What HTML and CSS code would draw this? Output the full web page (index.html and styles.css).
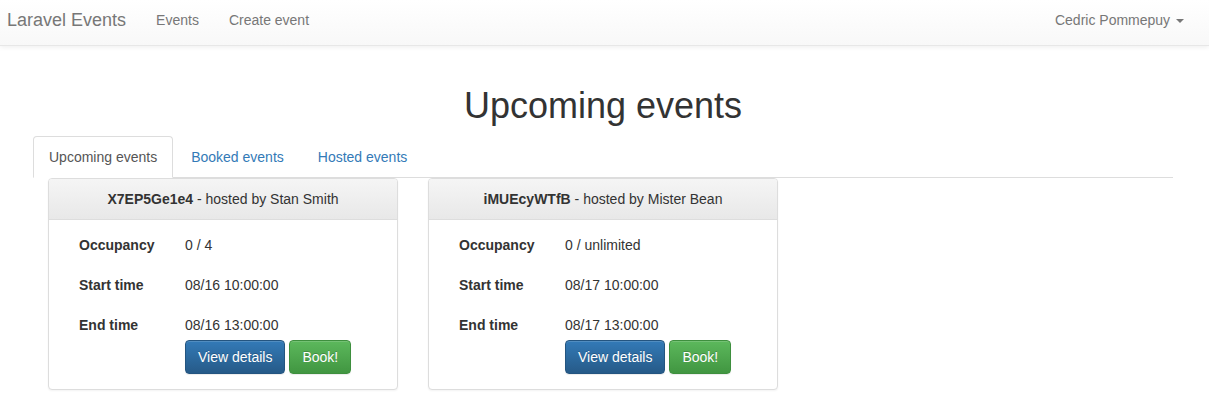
FILE: index.html
```html
<!DOCTYPE html>
<html lang="en">
<head>
<meta charset="utf-8">
<title>Laravel Events</title>
<link rel="stylesheet" href="styles.css">
</head>
<body>
<nav class="navbar">
  <div class="nav-left">
    <a class="brand" href="#">Laravel Events</a>
    <a class="nav-link" href="#">Events</a>
    <a class="nav-link" href="#">Create event</a>
  </div>
  <div class="nav-right">
    <a class="nav-link" href="#">Cedric Pommepuy <span class="caret"></span></a>
  </div>
</nav>

<main class="container">
  <h1 class="title">Upcoming events</h1>
  <ul class="tabs">
    <li class="tab active"><a href="#">Upcoming events</a></li>
    <li class="tab"><a href="#">Booked events</a></li>
    <li class="tab"><a href="#">Hosted events</a></li>
  </ul>

  <div class="cards">
    <div class="col">
      <div class="panel">
        <div class="panel-heading"><strong>X7EP5Ge1e4</strong> - hosted by Stan Smith</div>
        <div class="panel-body">
          <div class="line"><span class="label">Occupancy</span><span class="value">0 / 4</span></div>
          <div class="line"><span class="label">Start time</span><span class="value">08/16 10:00:00</span></div>
          <div class="line last"><span class="label">End time</span><span class="value">08/16 13:00:00</span></div>
          <div class="actions">
            <a class="btn btn-primary" href="#">View details</a>
            <a class="btn btn-success" href="#">Book!</a>
          </div>
        </div>
      </div>
    </div>
    <div class="col">
      <div class="panel">
        <div class="panel-heading"><strong>iMUEcyWTfB</strong> - hosted by Mister Bean</div>
        <div class="panel-body">
          <div class="line"><span class="label">Occupancy</span><span class="value">0 / unlimited</span></div>
          <div class="line"><span class="label">Start time</span><span class="value">08/17 10:00:00</span></div>
          <div class="line last"><span class="label">End time</span><span class="value">08/17 13:00:00</span></div>
          <div class="actions">
            <a class="btn btn-primary" href="#">View details</a>
            <a class="btn btn-success" href="#">Book!</a>
          </div>
        </div>
      </div>
    </div>
  </div>
</main>
</body>
</html>
```

FILE: styles.css
```css
* { box-sizing: border-box; }

html, body {
  margin: 0;
  padding: 0;
}

body {
  font-family: "Liberation Sans", Arial, Helvetica, sans-serif;
  font-size: 14px;
  line-height: 20px;
  color: #333;
  background: #fff;
}

a { text-decoration: none; }

/* Navbar */
.navbar {
  display: flex;
  justify-content: space-between;
  align-items: flex-start;
  height: 46px;
  background-image: linear-gradient(to bottom, #fff 0, #f8f8f8 100%);
  border-bottom: 1px solid #e7e7e7;
  box-shadow: inset 0 1px 0 rgba(255,255,255,.15), 0 1px 5px rgba(0,0,0,.075);
  margin-bottom: 20px;
}

.nav-left, .nav-right {
  display: flex;
  align-items: flex-start;
}

.nav-right { margin-right: 10px; }

.brand {
  display: block;
  padding: 10px 15px 15px 7px;
  font-size: 18px;
  line-height: 20px;
  color: #777;
}

.nav-link {
  display: block;
  padding: 10px 15px;
  line-height: 20px;
  color: #777;
}

.caret {
  display: inline-block;
  width: 0;
  height: 0;
  margin-left: 2px;
  vertical-align: middle;
  border-top: 4px solid #777;
  border-right: 4px solid transparent;
  border-left: 4px solid transparent;
}

/* Container */
.container {
  width: 1143px;
  padding-right: 3px;
  margin: 0 auto;
}

.title {
  margin: 40px 0 10px;
  font-size: 36px;
  font-weight: 500;
  line-height: 1.1;
  text-align: center;
  color: #333;
}

/* Tabs */
.tabs {
  display: flex;
  list-style: none;
  margin: 0;
  padding: 0;
  border-bottom: 1px solid #ddd;
}

.tab {
  margin-right: 2px;
  margin-bottom: -1px;
}

.tab a {
  display: block;
  padding: 10px 15px;
  line-height: 20px;
  color: #337ab7;
  border: 1px solid transparent;
  border-radius: 4px 4px 0 0;
}

.tab.active a {
  color: #555;
  background: #fff;
  border-color: #ddd #ddd transparent;
}

/* Cards */
.cards {
  display: flex;
}

.col {
  width: 380px;
  padding: 0 15px;
}

.panel {
  background: #fff;
  border: 1px solid #ddd;
  border-radius: 4px;
  box-shadow: 0 1px 2px rgba(0,0,0,.05);
  margin-bottom: 20px;
}

.panel-heading {
  padding: 10px 15px;
  text-align: center;
  color: #333;
  background-image: linear-gradient(to bottom, #f5f5f5 0, #e8e8e8 100%);
  border-bottom: 1px solid #ddd;
  border-radius: 3px 3px 0 0;
}

.panel-body {
  padding: 15px;
}

.line {
  display: flex;
  margin-bottom: 20px;
}

.line.last { margin-bottom: 5px; }

.label {
  width: 106px;
  padding: 0 15px;
  font-weight: bold;
}

.value {
  width: 212px;
  padding: 0 15px;
}

.actions {
  display: flex;
  gap: 4px;
  padding-left: 121px;
}

.btn {
  display: inline-block;
  padding: 6px 12px;
  font-size: 14px;
  line-height: 20px;
  border: 1px solid transparent;
  border-radius: 4px;
  color: #fff;
  text-shadow: 0 -1px 0 rgba(0,0,0,.2);
  box-shadow: inset 0 1px 0 rgba(255,255,255,.15), 0 1px 1px rgba(0,0,0,.075);
}

.btn-primary {
  background-image: linear-gradient(to bottom, #337ab7 0, #265a88 100%);
  border-color: #245580;
}

.btn-success {
  background-image: linear-gradient(to bottom, #5cb85c 0, #419641 100%);
  border-color: #3e8f3e;
}
```
